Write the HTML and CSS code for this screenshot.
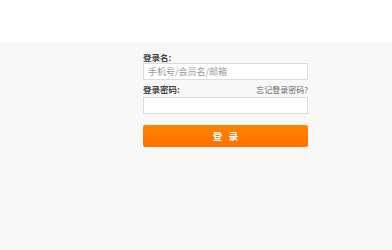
FILE: index.html
```html
<!DOCTYPE html>
<html lang="zh-CN">
<head>
<meta charset="utf-8">
<link rel="stylesheet" href="styles.css">
</head>
<body>
<div class="top"></div>
<div class="main">
  <form class="login">
    <div class="row"><label class="lbl">登录名:</label></div>
    <input class="field" type="text" placeholder="手机号/会员名/邮箱">
    <div class="row row2"><label class="lbl">登录密码:</label><a class="forget">忘记登录密码?</a></div>
    <input class="field" type="password">
    <button class="btn" type="button">登&nbsp;&nbsp;&nbsp;录</button>
  </form>
</div>
</body>
</html>
```

FILE: styles.css
```css
html, body {
  margin: 0;
  padding: 0;
  height: 100%;
}
body {
  font-family: "Noto Sans CJK SC", "Noto Sans", sans-serif;
  background: #f8f8f8;
}
.top {
  height: 43px;
  background: #ffffff;
}
.main {
  background: #f8f8f8;
  padding-top: 9px;
}
.login {
  margin: 0 0 0 143px;
  width: 165px;
  display: flex;
  flex-direction: column;
}
.row {
  display: flex;
  justify-content: space-between;
  align-items: center;
  height: 11px;
}
.row2 {
  margin-top: 4px;
  margin-bottom: 2px;
}
.lbl {
  font-size: 8.5px;
  font-weight: bold;
  color: #444;
  line-height: 11px;
}
.forget {
  font-size: 8px;
  color: #666;
  line-height: 11px;
}
.field {
  box-sizing: border-box;
  height: 17px;
  width: 165px;
  margin: 0;
  border: 1px solid #dcdcdc;
  background: #fff;
  padding: 0 4px;
  font-size: 9px;
  font-family: inherit;
  outline: none;
}
.field::placeholder {
  color: #9a9a9a;
}
.btn {
  margin-top: 11px;
  height: 22px;
  width: 165px;
  border: none;
  border-radius: 2px;
  background: linear-gradient(#ff8400, #ff7000);
  color: #fff;
  font-family: inherit;
  font-size: 9.5px;
  font-weight: bold;
  padding: 0;
}
```
